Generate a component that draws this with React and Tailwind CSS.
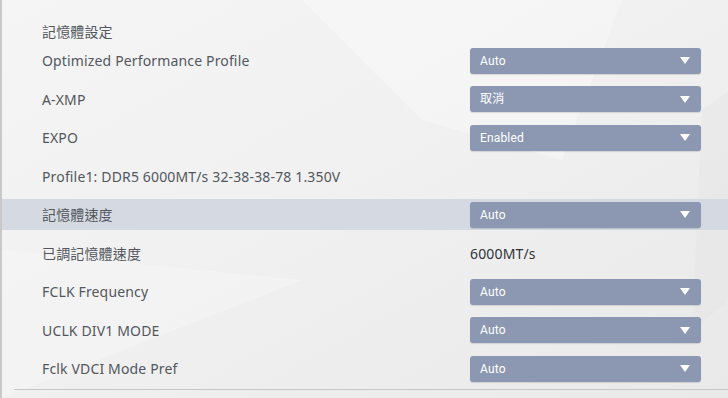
import React from "react";

const rows = [
  { label: "Optimized Performance Profile", value: "Auto", type: "select" },
  { label: "A-XMP", value: "取消", type: "select" },
  { label: "EXPO", value: "Enabled", type: "select" },
  { label: "Profile1: DDR5 6000MT/s 32-38-38-78 1.350V", type: "none" },
  { label: "記憶體速度", value: "Auto", type: "select", active: true },
  { label: "已調記憶體速度", value: "6000MT/s", type: "text" },
  { label: "FCLK Frequency", value: "Auto", type: "select" },
  { label: "UCLK DIV1 MODE", value: "Auto", type: "select" },
  { label: "Fclk VDCI Mode Pref", value: "Auto", type: "select" },
];

function Select({ value }) {
  return (
    <div className="flex items-center justify-between w-[231px] h-[26px] rounded-[3px] bg-[#8c98b1] pl-[10px] pr-[11px] shadow-[0_1px_1px_rgba(0,0,0,0.12)]">
      <span className="text-[12px] text-white font-['Roboto','Noto_Sans_CJK_TC',sans-serif]">{value}</span>
      <svg width="10" height="7" viewBox="0 0 10 7">
        <path d="M0 0 H10 L5 7 Z" fill="#ffffff" />
      </svg>
    </div>
  );
}

export default function App() {
  return (
    <div className="relative w-[728px] h-[398px] overflow-hidden bg-gradient-to-br from-[#f5f5f5] via-[#f0f0f0] to-[#e9e9e9] border-l-2 border-[#c9c9c9] font-['Noto_Sans','Noto_Sans_CJK_TC',sans-serif] text-[#53575d] tracking-[0.15px]">
      <svg className="absolute inset-0 pointer-events-none" width="728" height="398">
        <polygon points="300,0 620,0 560,160 420,120" fill="#ffffff" opacity="0.3" />
        <polygon points="700,110 728,90 728,300 690,330" fill="#e4e4e4" opacity="0.4" />
        <polygon points="0,250 300,280 0,398" fill="#ffffff" opacity="0.2" />
      </svg>
      <div className="relative flex flex-col">
        <div className="h-[45px] pt-[22px] pl-[40px] text-[14px] leading-[20px]">記憶體設定</div>
        <div className="flex flex-col gap-[7.5px]">
          {rows.map((r, i) => (
            <div
              key={i}
              className={`flex items-center h-[31px] pl-[40px] ${r.active ? "bg-[#d5dae2]" : ""}`}
            >
              <div className="w-[428px] text-[14px] whitespace-nowrap">{r.label}</div>
              {r.type === "select" && <Select value={r.value} />}
              {r.type === "text" && (
                <div className="text-[14px] text-[#2f3236]">{r.value}</div>
              )}
            </div>
          ))}
        </div>
        <div className="mt-[5px] ml-[12px] h-px bg-[#c6c6c6]" />
      </div>
    </div>
  );
}
